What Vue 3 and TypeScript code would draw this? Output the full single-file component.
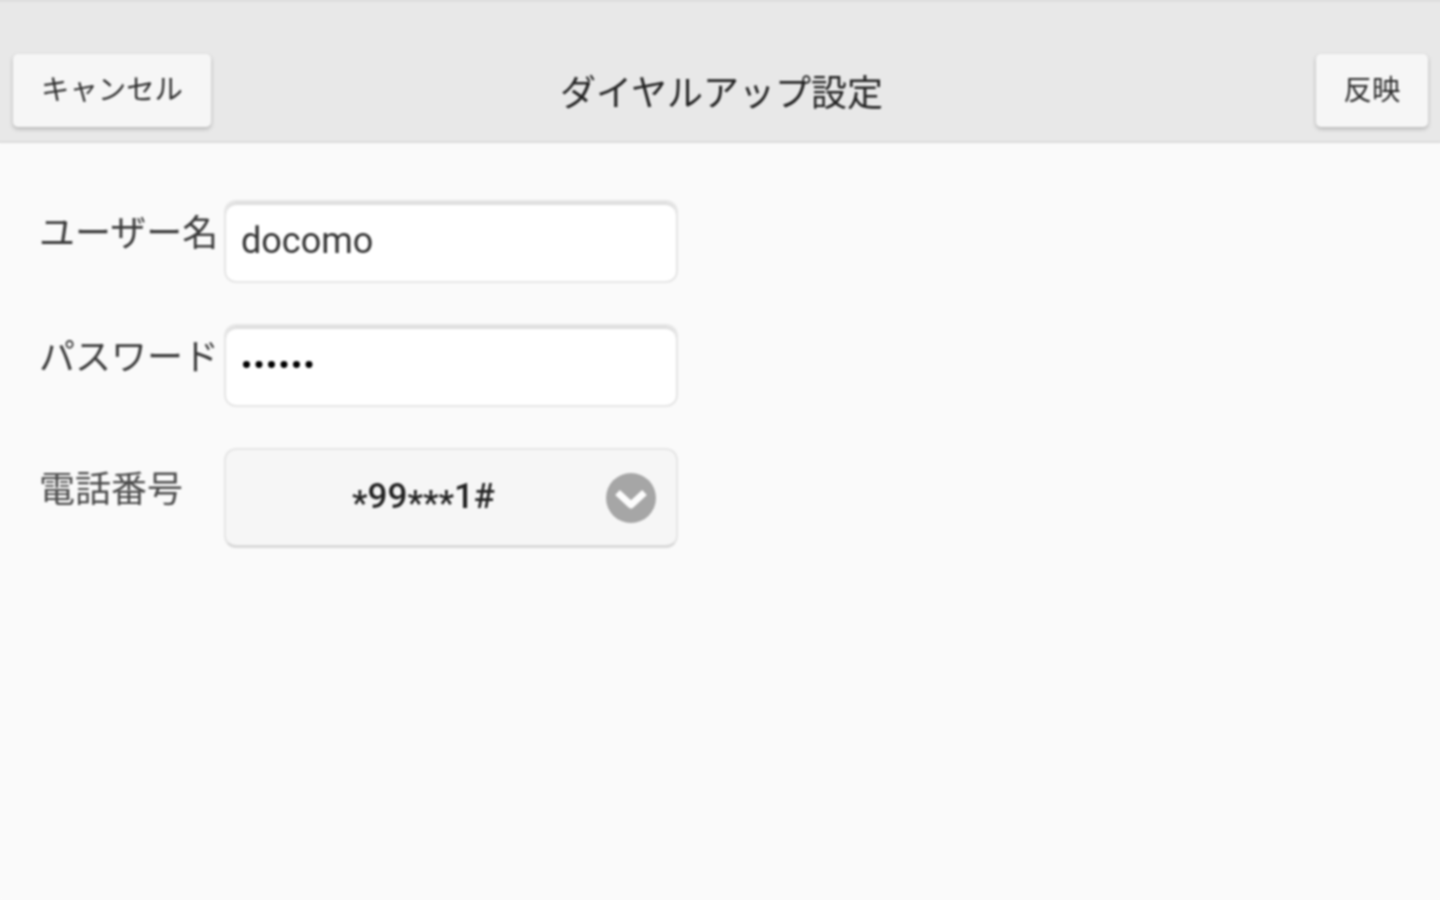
<script setup lang="ts">
const username = "docomo";
const password = "••••••";
</script>
<template>
    <div class="screen">
        <header class="bar">
            <button class="bar-btn wide">キャンセル</button>
            <h1 class="title">ダイヤルアップ設定</h1>
            <button class="bar-btn end">反映</button>
        </header>
        <main class="form">
            <div class="row">
                <div class="label">ユーザー名</div>
                <div class="field">{{ username }}</div>
            </div>
            <div class="row">
                <div class="label">パスワード</div>
                <div class="field secret">{{ password }}</div>
            </div>
            <div class="row phone">
                <div class="label">電話番号</div>
                <div class="select">
                    <span class="select-value"><span class="star">*</span>99<span class="star">***</span>1#</span>
                    <svg class="chevron" width="50" height="50" viewBox="0 0 50 50">
                        <circle cx="25" cy="25" r="25" fill="#a6a6a6" />
                        <path d="M11.5 19.5 L25 32 L38.5 19.5" fill="none" stroke="#fdfdfd" stroke-width="7" stroke-linejoin="round" />
                    </svg>
                </div>
            </div>
        </main>
    </div>
</template>
<style scoped>
.screen {
    width: 1440px;
    height: 900px;
    background: #fafafa;
    color: #333;
    font-family: Roboto, "Noto Sans CJK JP", sans-serif;
    filter: blur(0.8px);
}

.bar {
    box-sizing: border-box;
    height: 143px;
    margin: 0 -4px;
    padding: 54px 16px 0 17px;
    display: grid;
    grid-template-columns: 1fr auto 1fr;
    align-items: start;
    background: #e8e8e8;
    border-top: 2px solid #dedede;
    border-bottom: 2px solid #dcdcdc;
    box-shadow: 0 -4px 0 #dedede;
}

.bar-btn {
    box-sizing: border-box;
    height: 73px;
    margin-top: -2px;
    padding: 0 0 7px;
    border: none;
    border-radius: 5px;
    background: #f6f6f6;
    box-shadow: 0 2px 4px rgba(0, 0, 0, 0.24);
    color: #2c2c2c;
    font-family: inherit;
    font-size: 28.4px;
}

.wide {
    justify-self: start;
    width: 198px;
}

.end {
    justify-self: end;
    width: 112px;
}

.title {
    margin: 14px 0 0 2px;
    font-size: 36px;
    font-weight: 400;
    line-height: 48px;
    color: #222;
}

.form {
    padding: 57px 0 0 39px;
    display: flex;
    flex-direction: column;
    gap: 41px;
}

.row {
    display: flex;
    align-items: flex-start;
}

.label {
    box-sizing: border-box;
    width: 185px;
    padding-top: 4px;
    font-size: 36px;
    line-height: 60px;
    color: #3a3a3a;
    white-space: nowrap;
}

.phone .label {
    padding-top: 12px;
    color: #4a4a4a;
}

.field {
    box-sizing: border-box;
    width: 454px;
    height: 83px;
    padding: 9px 16px 0 15px;
    border: 2px solid #e6e6e6;
    border-radius: 12px;
    background: #fff;
    box-shadow: inset 0 3px 1px #dedede;
    color: #333;
    font-size: 36px;
    line-height: 60px;
}

.secret {
    padding-top: 11px;
    color: #000;
    font-size: 30px;
    font-weight: 700;
    letter-spacing: 1.7px;
    line-height: 56px;
}

.select {
    box-sizing: border-box;
    width: 454px;
    height: 100px;
    padding: 0 20px 0 0;
    display: flex;
    align-items: center;
    border: 2px solid #e6e6e6;
    border-bottom-width: 3px;
    border-bottom-color: #dadada;
    border-radius: 12px;
    background: #f6f6f6;
}

.select-value {
    flex: 1;
    padding: 5px 0 0 15px;
    text-align: center;
    color: #222;
    font-size: 35px;
    font-weight: 500;
}

.star {
    vertical-align: -7px;
}

.chevron {
    flex: none;
}
</style>
<style>
html, body {
    margin: 0;
    overflow: hidden;
    background: #fafafa;
}
</style>
